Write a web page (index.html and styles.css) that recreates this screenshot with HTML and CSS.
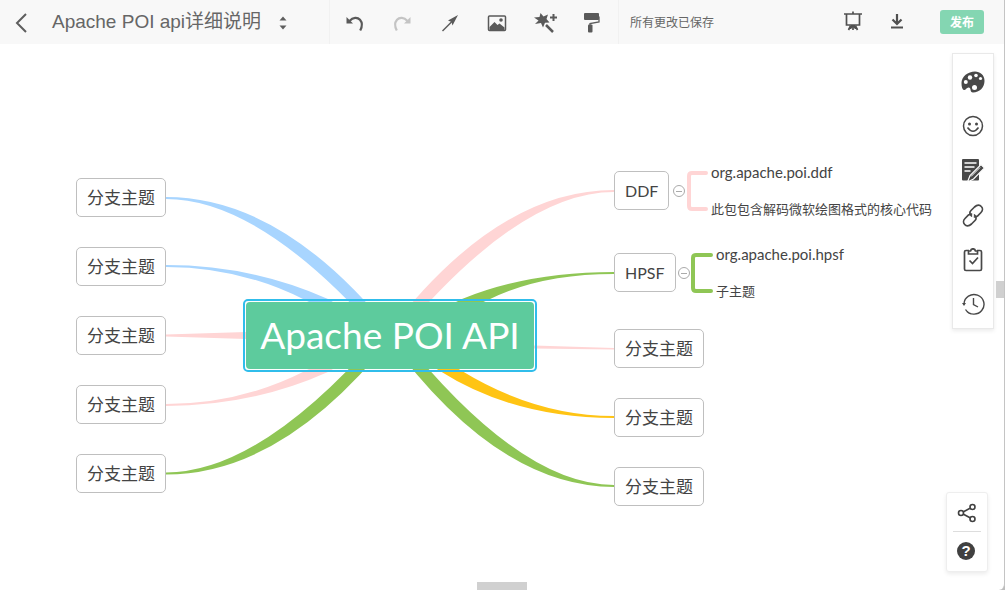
FILE: index.html
```html
<!DOCTYPE html>
<html lang="zh-CN">
<head>
<meta charset="utf-8">
<meta name="viewport" content="width=device-width, initial-scale=1">
<title>Apache POI api详细说明</title>
<link rel="stylesheet" href="styles.css">
</head>
<body>
<div class="app">
  <header class="topbar">
    <div class="file">
      <button class="icon-btn" aria-label="返回"><svg width="24" height="24" viewBox="0 0 24 24" fill="none" stroke="#5e5e5e" stroke-width="2"><path d="M17 4 8 13l9 9"/></svg></button>
      <h1 class="file-name">Apache POI api详细说明</h1>
      <button class="icon-btn" aria-label="展开"><svg width="24" height="24" viewBox="0 0 24 24" fill="#5e5e5e"><path d="M8.500 10.500 12 6.500l3.500 4zM8.500 15.500l3.500 4 3.500-4z"/></svg></button>
    </div>
    <nav class="tools" aria-label="工具">
      <button class="icon-btn" aria-label="撤销"><svg width="24" height="24" viewBox="0 0 24 24"><path d="M6.500 11C10 7 14.500 7 17 9.800c2.500 3 2.500 6.500.2 10.700" fill="none" stroke="#5a5a5a" stroke-width="2.200"/><path d="M3.500 7v6.500h6.500z" fill="#5a5a5a"/></svg></button>
      <button class="icon-btn" aria-label="重做" disabled><svg width="24" height="24" viewBox="0 0 24 24"><path d="M17.500 11C14 7 9.500 7 7 9.800c-2.500 3-2.500 6.500-.2 10.700" fill="none" stroke="#c4c4c4" stroke-width="2.200"/><path d="M20.500 7v6.500h-6.500z" fill="#c4c4c4"/></svg></button>
      <button class="icon-btn" aria-label="关系线"><svg width="24" height="24" viewBox="0 0 24 24"><path d="M4.500 21 15 10.500" stroke="#5a5a5a" stroke-width="1.500"/><path d="M20 5 10 10.500l3.500 1.500 1 3.500z" fill="#5a5a5a"/></svg></button>
      <button class="icon-btn" aria-label="图片"><svg width="24" height="24" viewBox="0 0 24 24"><rect x="3.500" y="6" width="17" height="14.500" rx="1" fill="none" stroke="#5a5a5a" stroke-width="1.500"/><path d="M4.500 20v-3l5-5 3 3 2-1.500 5 4V20z" fill="#5a5a5a"/><circle cx="16" cy="10" r="1.800" fill="#5a5a5a"/></svg></button>
      <button class="icon-btn" aria-label="美化"><svg width="24" height="24" viewBox="0 0 24 24" fill="#5a5a5a"><path d="m7.500 3 3 3.500 4.500-2-1.500 4.500 3 3.500-4.500.3-2 4.700-2-4.500L2 14l3.500-3.500L1 7.500l5.500-.5z"/><path d="m13 15 7 7" stroke="#5a5a5a" stroke-width="2.500"/><path d="M20.500 4v7M17 7.500h7" stroke="#5a5a5a" stroke-width="2"/></svg></button>
      <button class="icon-btn" aria-label="格式刷"><svg width="24" height="24" viewBox="0 0 24 24"><rect x="4" y="3" width="15" height="7" rx="1" fill="#5a5a5a"/><path d="M19 6.500V12l-9 1.500V15" fill="none" stroke="#5a5a5a" stroke-width="1.300"/><rect x="8" y="14.500" width="4.500" height="8" rx="1" fill="#5a5a5a"/></svg></button>
    </nav>
    <p class="status">所有更改已保存</p>
    <div class="actions">
      <button class="icon-btn" aria-label="演示"><svg width="24" height="24" viewBox="0 0 24 24" fill="none" stroke="#505050" stroke-width="1.700"><path d="M3 4h18M5.500 4v11h13V4M12 1.500V4M9.500 16 7.500 20M14.500 16l2 4M12 15v5"/><path d="m10 15-2.500 4h2.500l2-2 2 2h2.500L14 15z" fill="#505050" stroke="none"/></svg></button>
      <button class="icon-btn" aria-label="下载"><svg width="24" height="24" viewBox="0 0 24 24" fill="none" stroke="#505050" stroke-width="2.200"><path d="M12 4v10M7.500 9.500 12 14l4.500-4.500M6 17.500h12"/></svg></button>
      <button class="publish">发布</button>
    </div>
  </header>

  <main class="canvas">
    <svg class="links" width="1005" height="546" viewBox="0 44 1005 546" aria-hidden="true">
      <g fill="#a8d5ff">
        <path d="M166 197Q284 197 394 335H380Q260 199 166 199z"/>
        <path d="M166 265Q252 265 328 299l5 3H309l-4-2Q240 267 166 267z"/>
      </g>
      <g fill="#ffd5d5">
        <path d="M166 334.500 246 332v7l-80-2.500z"/>
        <path d="M166 406Q252 406 328 372l5-3H309l-4 2Q240 404 166 404z"/>
        <path d="M614 190Q496 190 386 335h14Q520 192 614 192z"/>
        <path d="M534 345.500 614 348v1.500l-80-1z"/>
      </g>
      <g fill="#8fc655">
        <path d="M166 474.500Q284 474.500 394 335h-14Q260 472.500 166 472.500z"/>
        <path d="M614 272Q528 272 462 299l-8 4h27l7-3Q540 274 614 274z"/>
        <path d="M614 487Q496 487 386 335h14Q520 485 614 485z"/>
      </g>
      <path fill="#ffc414" d="M614 418Q514 418 440 371l-5-3h22l5 3Q536 416 614 416z"/>
      <g fill="none" stroke-width="4" stroke-linecap="round">
        <path stroke="#ffd5d5" d="M706 173H692q-3 0-3 3v30q0 3 3 3h14"/>
        <path stroke="#8fc655" d="M711 255H696q-3 0-3 3v30q0 3 3 3h15"/>
      </g>
    </svg>

    <div class="node l1">分支主题</div>
    <div class="node l2">分支主题</div>
    <div class="node l3">分支主题</div>
    <div class="node l4">分支主题</div>
    <div class="node l5">分支主题</div>
    <div class="root"><div class="root-label">Apache POI API</div></div>
    <div class="node latin r1">DDF</div>
    <div class="node latin r2">HPSF</div>
    <div class="node r3">分支主题</div>
    <div class="node r4">分支主题</div>
    <div class="node r5">分支主题</div>
    <button class="fold f1" aria-label="收起 DDF"></button>
    <button class="fold f2" aria-label="收起 HPSF"></button>
    <div class="leaf s1">org.apache.poi.ddf</div>
    <div class="leaf s2">此包包含解码微软绘图格式的核心代码</div>
    <div class="leaf s3">org.apache.poi.hpsf</div>
    <div class="leaf s4">子主题</div>

    <aside class="side-panel">
      <button class="icon-btn" aria-label="风格"><svg width="24" height="24" viewBox="0 0 24 24"><path fill="#484848" d="M14 1.500C7 1.500.5 6.500.5 13c0 4 .8 6.500 2.300 7 2 .6 2.700-3 5.200-2.500 2.500.6.500 5 4 5 6.500 0 11.500-5 11.500-11.500 0-6-4.500-9.500-9.500-9.500z"/><g fill="#fff"><circle cx="4.800" cy="12" r="2"/><circle cx="9" cy="7.500" r="2.200"/><circle cx="15" cy="5.500" r="1.800"/><circle cx="19.500" cy="8.500" r="1.600"/><circle cx="13.500" cy="17.500" r="2.500"/></g></svg></button>
      <button class="icon-btn" aria-label="图标"><svg width="24" height="24" viewBox="0 0 24 24" fill="none" stroke="#484848" stroke-width="1.500"><circle cx="12" cy="12" r="9.500"/><path d="M6.500 13.500q5.500 7.500 11 0"/><g fill="#484848" stroke="none"><circle cx="8.500" cy="10" r="1.500"/><circle cx="15.500" cy="10" r="1.500"/></g></svg></button>
      <button class="icon-btn" aria-label="备注"><svg width="24" height="24" viewBox="0 0 24 24"><rect x="1" y="0" width="17" height="21.500" rx="1" fill="#484848"/><path d="M3.500 4h12M3.500 8h10M3.500 12h6" stroke="#fff" stroke-width="1.400"/><path d="M6.500 23 9 16.500 20 5.500 23.500 9l-11 11z" fill="#484848" stroke="#fff" stroke-width="1.200"/><path d="m10 17.500 9-9" stroke="#fff"/></svg></button>
      <button class="icon-btn" aria-label="链接"><svg width="24" height="24" viewBox="0 0 24 24" fill="none" stroke="#484848" stroke-width="1.700" stroke-linecap="round"><path d="M10.500 13C8.500 11 8.500 9 10 7.500L13.500 4c3-2.700 5.500-2 6.800-.5 1.500 1.500 1.700 4-.3 6L16.500 13c-1 .8-2 1-3 .8M13.500 12c2 2 2 4 .5 5.500L10.500 21c-3 2.700-5.500 2-6.800.5-1.500-1.500-1.700-4 .3-6L7.500 12c1-.8 2-1 3-.8"/></svg></button>
      <button class="icon-btn" aria-label="任务"><svg width="24" height="24" viewBox="0 0 24 24" fill="none" stroke="#484848" stroke-width="1.700"><path d="M8 2.500H5Q3.500 2.500 3.500 4v17q0 1.500 1.500 1.500h14q1.500 0 1.500-1.500V4q0-1.500-1.500-1.500h-3"/><path d="M7.500 6V3h2Q10 .8 12 .8T14.500 3h2v3z"/><path d="m8.500 12.500 3 3L17 9.500"/></svg></button>
      <button class="icon-btn" aria-label="历史"><svg width="24" height="24" viewBox="0 0 24 24" fill="none" stroke="#484848" stroke-width="1.400"><path d="M3 12a10 9.800 0 1 1 1.500 5.500M6 19.500q2 2 4 2.300M12.500 6v6.500l4.500 2.500"/><path d="M1 11h4l-2 3z" fill="#484848" stroke="none"/></svg></button>
    </aside>

    <aside class="help-panel">
      <button class="icon-btn" aria-label="分享"><svg width="24" height="24" viewBox="0 0 24 24" fill="none" stroke="#404040" stroke-width="1.600"><circle cx="6" cy="12" r="2.500"/><circle cx="17.500" cy="6" r="2.500"/><circle cx="17.500" cy="18" r="2.500"/><path d="m8.500 10.800 6.500-3.500M8.500 13.200l6.500 3.500"/></svg></button>
      <button class="icon-btn help" aria-label="帮助"><span class="question">?</span></button>
    </aside>
    <div class="thumb-y"></div>
    <div class="thumb-x"></div>
  </main>
</div>
</body>
</html>
```

FILE: styles.css
```css
* { box-sizing: border-box; }

body {
  margin: 0;
  background: #bdbdbd;
  color: #444;
  font-family: "Liberation Sans", "Noto Sans CJK SC", sans-serif;
}

button {
  margin: 0;
  padding: 0;
  border: 0;
  background: none;
  font: inherit;
}

.app {
  display: flex;
  flex-direction: column;
  min-height: 100vh;
  border-right: 1px solid #c4c4c4;
  border-bottom-right-radius: 6px;
  background: #fff;
  overflow: hidden;
}

.topbar {
  display: flex;
  align-items: stretch;
  height: 44px;
  background: #f8f8f8;
}

.icon-btn {
  display: flex;
  flex: none;
  align-items: center;
  justify-content: center;
  width: 24px;
  height: 24px;
}

.file {
  display: flex;
  align-items: center;
  width: 330px;
  padding-left: 9px;
  border-right: 1px solid #f1f1f1;
}

.file-name {
  margin: 0 10px 0 19px;
  color: #666;
  font-size: 19px;
  font-weight: 400;
  line-height: 28px;
  white-space: nowrap;
}

.tools {
  display: flex;
  align-items: center;
  justify-content: space-between;
  width: 289px;
  padding: 0 14px 0 13px;
  border-right: 1px solid #f1f1f1;
}

.status {
  align-self: center;
  margin: 0 0 0 11px;
  color: #666;
  font-size: 12px;
  line-height: 18px;
  padding-top: 2px;
}

.actions {
  display: flex;
  align-items: center;
  gap: 20px;
  margin-left: auto;
  padding-right: 20px;
}

.publish {
  width: 44px;
  height: 24px;
  margin-left: 11px;
  padding-bottom: 2px;
  border-radius: 3px;
  background: #84d6b2;
  color: #fff;
  font-size: 12px;
  font-weight: 700;
}

.canvas {
  position: relative;
  flex: 1;
  min-height: 546px;
}

.links {
  position: absolute;
  top: 0;
  left: 0;
}

/* Topics placed on the free canvas */
.node {
  position: absolute;
  padding: 1px 10px 0;
  border: 1px solid #bfbfbf;
  border-radius: 5px;
  background: #fff;
  color: #444;
  font-family: Lato, "Noto Sans CJK SC", sans-serif;
  font-size: 17px;
  line-height: 36px;
  white-space: nowrap;
}

.latin { font-size: 16px; }

.l1, .l2, .l3, .l4, .l5 { left: 76px; }
.r1, .r2, .r3, .r4, .r5 { left: 614px; }
.l1 { top: 134px; }
.l2 { top: 203px; }
.l3 { top: 272px; }
.l4 { top: 341px; }
.l5 { top: 410px; }
.r1 { top: 127px; }
.r2 { top: 209px; }
.r3 { top: 285px; }
.r4 { top: 354px; }
.r5 { top: 423px; }

.root {
  position: absolute;
  top: 255px;
  left: 243px;
  padding: 1px;
  border: 2px solid #30bdeb;
  border-radius: 5px;
}

.root-label {
  min-width: 288px;
  padding-bottom: 2px;
  border-radius: 4px;
  background: #5dcb9d;
  color: #fff;
  font-family: Lato, sans-serif;
  font-size: 37px;
  line-height: 65px;
  text-align: center;
}

.fold {
  position: absolute;
  display: flex;
  align-items: center;
  justify-content: center;
  width: 12px;
  height: 12px;
  border: 1px solid #aaa;
  border-radius: 50%;
  background: #fff;
}

.fold::before {
  width: 6px;
  height: 1px;
  background: #aaa;
  content: "";
}

.f1 { top: 141px; left: 673px; }
.f2 { top: 223px; left: 678px; }

.leaf {
  position: absolute;
  color: #444;
  font-family: Lato, "Noto Sans CJK SC", sans-serif;
  font-size: 13px;
  line-height: 20px;
  white-space: nowrap;
}

.s1, .s2 { left: 711px; }
.s3, .s4 { left: 716px; }
.s1 { top: 118px; font-size: 15px; }
.s2 { top: 155px; }
.s3 { top: 200px; font-size: 15px; }
.s4 { top: 237px; }

.side-panel {
  position: absolute;
  top: 9px;
  right: 10px;
  display: flex;
  flex-direction: column;
  align-items: center;
  justify-content: space-between;
  width: 42px;
  height: 276px;
  padding: 16px 0 12px;
  border: 1px solid #e9e9e9;
  background: #fff;
  box-shadow: 0 2px 4px rgba(0, 0, 0, .08);
}

.help-panel {
  position: absolute;
  right: 16px;
  bottom: 18px;
  display: flex;
  flex-direction: column;
  align-items: center;
  width: 42px;
  padding: 8px 0;
  border: 1px solid #eee;
  border-radius: 3px;
  background: #fff;
  box-shadow: 0 2px 4px rgba(0, 0, 0, .08);
}

.help {
  width: 28px;
  height: 32px;
  margin-top: 6px;
  padding-right: 2px;
  border-top: 1px solid #ddd;
}

.question {
  width: 18px;
  height: 18px;
  margin-top: 6px;
  border-radius: 50%;
  background: #404040;
  color: #fff;
  font-size: 15px;
  font-weight: 700;
  line-height: 18px;
  text-align: center;
}

.thumb-y,
.thumb-x {
  position: absolute;
  background: #d0d0d0;
}

.thumb-y {
  top: 237px;
  right: 0;
  width: 8px;
  height: 17px;
}

.thumb-x {
  bottom: 0;
  left: 477px;
  width: 50px;
  height: 8px;
}
```
